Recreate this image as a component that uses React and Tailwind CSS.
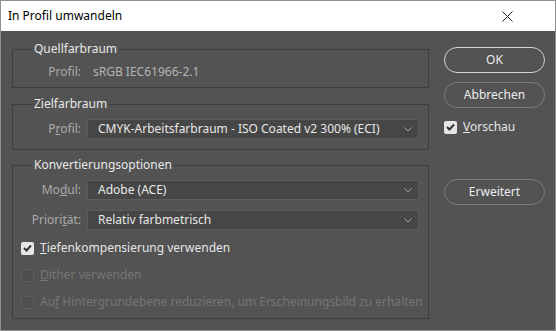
import React from "react";

const font = { fontFamily: '"Noto Sans", "Open Sans", sans-serif' };

const Chevron = () => (
  <svg width="8" height="5" viewBox="0 0 8 5" className="shrink-0">
    <polyline points="0.5,0.5 4,4 7.5,0.5" fill="none" stroke="#a8a8a8" strokeWidth="1" />
  </svg>
);

const Check = ({ checked, disabled }) => (
  <span
    className={
      "w-[13px] h-[13px] rounded-[2px] flex items-center justify-center shrink-0 " +
      (checked ? "bg-[#e6e6e6]" : disabled ? "border border-[#5e5e5e] bg-[#4f4f4f]" : "border border-[#888]")
    }
  >
    {checked && (
      <svg width="9" height="8" viewBox="0 0 9 8">
        <polyline points="1,4 3.5,6.5 8,1.5" fill="none" stroke="#333" strokeWidth="2" />
      </svg>
    )}
  </span>
);

const Select = ({ value }) => (
  <div className="flex-1 min-w-0 h-[20px] bg-[#464646] border border-[#5c5c5c] rounded-[1px] flex items-center justify-between pl-[10px] pr-[6px] text-[#e8e8e8]">
    <span className="whitespace-nowrap">{value}</span>
    <Chevron />
  </div>
);

const Group = ({ title, className, children }) => (
  <fieldset className={"min-w-0 border border-[#3e3e3e] " + className}>
    <legend className="ml-[19px] px-[2px] leading-[16px] text-[#e8e8e8]">{title}</legend>
    {children}
  </fieldset>
);

const Label = ({ children }) => (
  <span className="w-[69px] text-right pr-[1px] text-[#ababab] shrink-0">{children}</span>
);

const PillButton = ({ children, primary }) => (
  <button
    className={
      "w-[101px] h-[26px] rounded-full text-[#ececec] " +
      (primary ? "border-[1.5px] border-[#d2d2d2]" : "border border-[#7c7c7c]")
    }
  >
    {children}
  </button>
);

const CheckRow = ({ checked, disabled, children }) => (
  <div
    className={
      "flex items-center gap-[6px] h-[16px] whitespace-nowrap " +
      (disabled ? "text-[#767676]" : "text-[#e6e6e6]")
    }
  >
    <Check checked={checked} disabled={disabled} />
    <span>{children}</span>
  </div>
);

export default function App() {
  return (
    <div className="w-[556px] h-[331px] border border-[#8f8f8f] flex flex-col text-[12px]" style={font}>
      <div className="h-[30px] bg-white flex items-center justify-between pl-[7px] pr-[42px]">
        <span className="text-black">In Profil umwandeln</span>
        <svg width="11" height="11" viewBox="0 0 11 11">
          <path d="M0.5 0.5 L10.5 10.5 M10.5 0.5 L0.5 10.5" stroke="#222" strokeWidth="1" />
        </svg>
      </div>

      <div className="flex-1 bg-[#535353] flex pl-[11px] pr-[9px]">
        <div className="w-[417px] shrink-0 flex flex-col pt-[10px]">
          <Group title="Quellfarbraum" className="pt-[7px] pb-[7px]">
            <div className="flex items-center h-[16px] text-[#ababab]">
              <Label>Profil:</Label>
              <span className="ml-[11px] text-[#b4b4b4]">sRGB IEC61966-2.1</span>
            </div>
          </Group>

          <Group title="Zielfarbraum" className="mt-[8px] pt-[7px] pb-[10px] pr-[9px]">
            <div className="flex items-center gap-[5px]">
              <Label>
                P<u>r</u>ofil:
              </Label>
              <Select value="CMYK-Arbeitsfarbraum - ISO Coated v2 300% (ECI)" />
            </div>
          </Group>

          <Group title="Konvertierungsoptionen" className="mt-[7px] pt-[7px] pb-[8px] pr-[9px]">
            <div className="flex items-center gap-[5px]">
              <Label>
                Mo<u>d</u>ul:
              </Label>
              <Select value="Adobe (ACE)" />
            </div>
            <div className="flex items-center gap-[5px] mt-[10px]">
              <Label>
                Priori<u>t</u>ät:
              </Label>
              <Select value="Relativ farbmetrisch" />
            </div>
            <div className="flex flex-col pl-[8px] mt-[10px] gap-[11px]">
              <CheckRow checked>
                <u>T</u>iefenkompensierung verwenden
              </CheckRow>
              <CheckRow disabled>
                <u>D</u>ither verwenden
              </CheckRow>
              <CheckRow disabled>
                Au<u>f</u> Hintergrundebene reduzieren, um Erscheinungsbild zu erhalten
              </CheckRow>
            </div>
          </Group>
        </div>

        <div className="ml-[15px] flex flex-col pt-[16px]">
          <PillButton primary>OK</PillButton>
          <div className="mt-[9px]">
            <PillButton>Abbrechen</PillButton>
          </div>
          <div className="mt-[11px]">
            <CheckRow checked>
              <u>V</u>orschau
            </CheckRow>
          </div>
          <div className="mt-[44px]">
            <PillButton>Erweitert</PillButton>
          </div>
        </div>
      </div>
    </div>
  );
}
